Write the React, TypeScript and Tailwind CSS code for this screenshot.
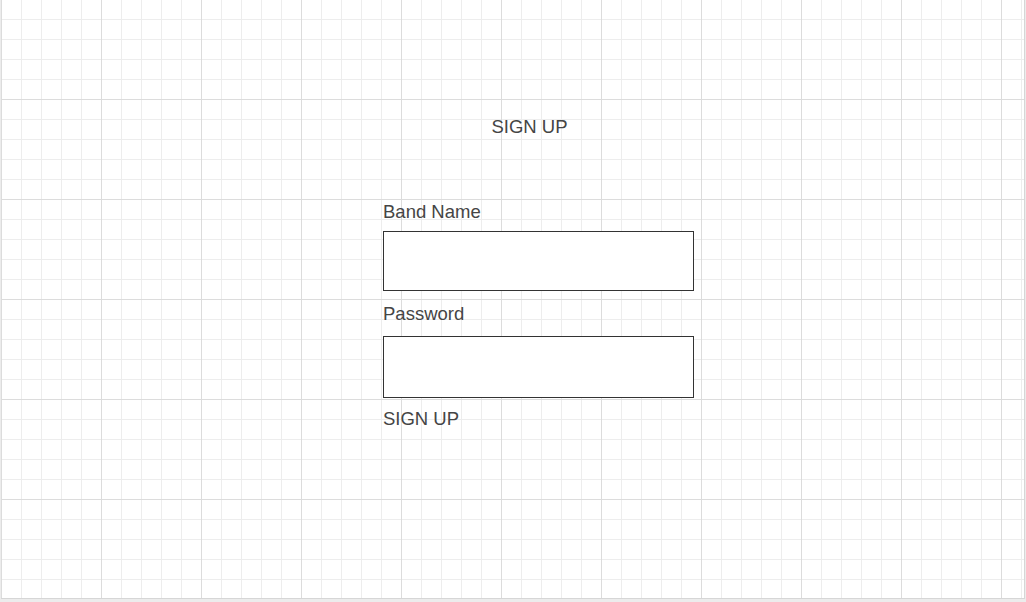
import React from 'react'

const App = () => {
  return (
    <div className="w-[1026px] h-[602px] bg-[#ececec] overflow-hidden font-['Liberation_Sans',Arial,sans-serif] text-[#454545]">
      <div className="ml-[1px] w-[1024px] h-[599px] bg-white border-r border-b border-[#d6d6d6] [background-image:linear-gradient(to_right,#dcdcdc_1px,transparent_1px),linear-gradient(to_bottom,#dcdcdc_1px,transparent_1px),linear-gradient(to_right,#ededed_1px,transparent_1px),linear-gradient(to_bottom,#ededed_1px,transparent_1px)] [background-size:100px_100px,100px_100px,20px_20px,20px_20px] [background-position:0_-1px]">
        <div className="ml-[382px] w-[311px] pt-[115px] flex flex-col">
          <h1 className="text-[18.5px] leading-[24px] text-center pr-[18px]">SIGN UP</h1>

          <label className="mt-[61px] text-[18.5px] leading-[24px]">Band Name</label>
          <input type="text" className="mt-[7px] h-[60px] w-[311px] bg-white border border-[#333333] outline-none" />

          <label className="mt-[11px] text-[18.5px] leading-[24px]">Password</label>
          <input type="password" className="mt-[10px] h-[62px] w-[311px] bg-white border border-[#333333] outline-none" />

          <button className="mt-[9px] self-start text-[18.5px] leading-[24px] text-[#454545]">SIGN UP</button>
        </div>
      </div>
    </div>
  )
}

export default App
